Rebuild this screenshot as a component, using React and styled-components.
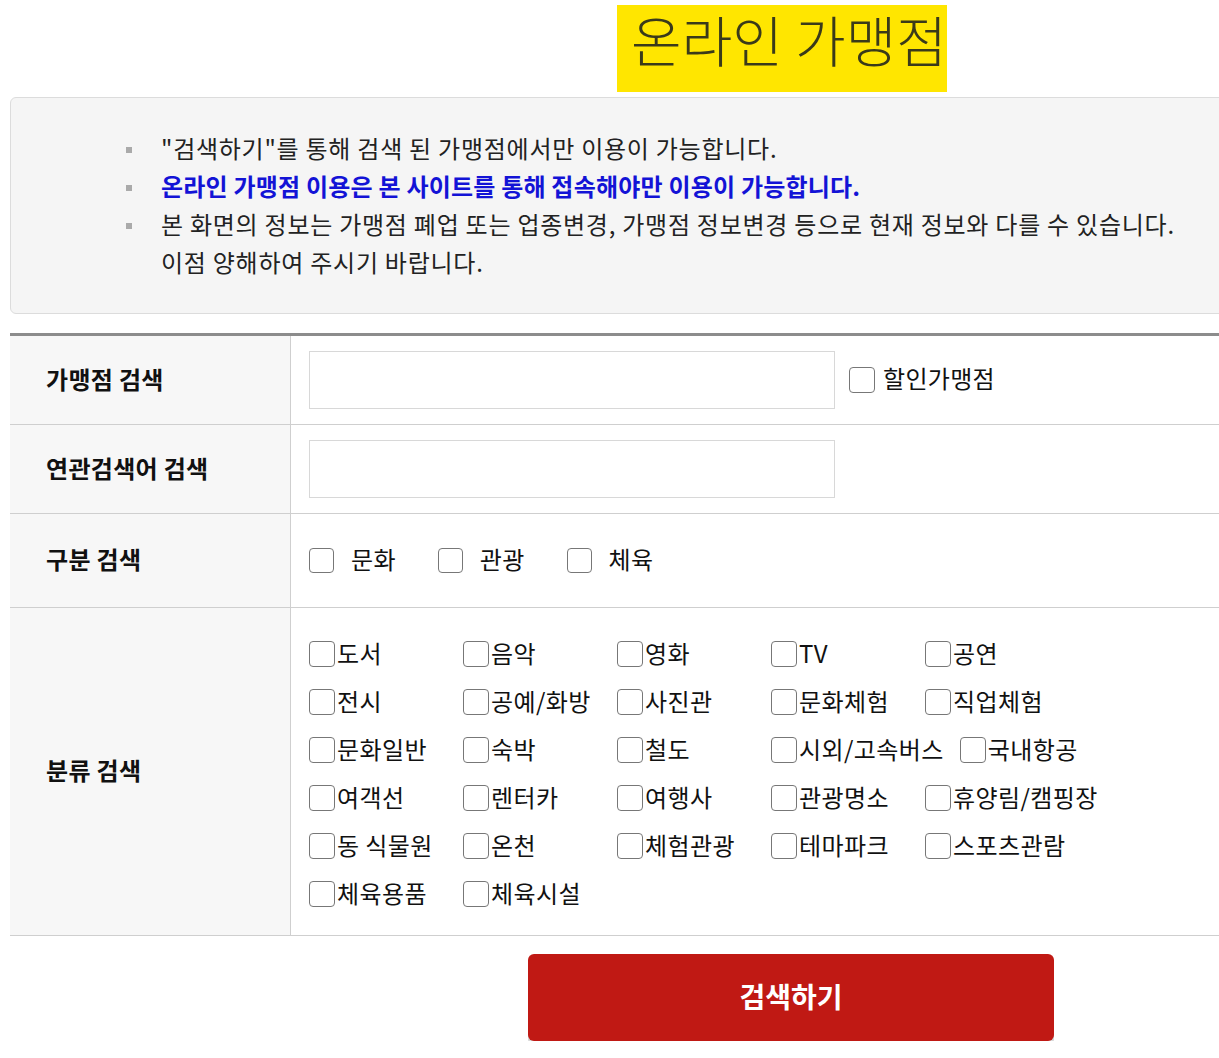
import React from 'react';
import styled, { createGlobalStyle } from 'styled-components';

const GlobalStyle = createGlobalStyle`
  html, body {
    margin: 0;
    padding: 0;
    overflow: hidden;
    background: #fff;
  }
  body {
    font-family: "Noto Sans CJK KR", "Noto Sans", sans-serif;
    color: #222;
  }
`;

const Page = styled.div`
  width: 1562px;
  margin-left: 10px;
`;

const TitleBar = styled.div`
  height: 97px;
  display: flex;
  justify-content: center;
  align-items: flex-start;
`;

const Title = styled.h1`
  margin: 5px 18px 0 0;
  padding: 0 0 0 14px;
  height: 87px;
  line-height: 66px;
  background: #ffe600;
  font-size: 55px;
  font-weight: 300;
  color: #3a3a1a;
`;

const Notice = styled.ul`
  box-sizing: border-box;
  margin: 0;
  height: 217px;
  padding: 31px 0 0 150px;
  list-style: none;
  background: #f5f5f5;
  border: 1px solid #dcdcdc;
  border-radius: 6px;
`;

const NoticeItem = styled.li`
  position: relative;
  font-size: 24px;
  line-height: 38px;
  color: ${({ $strong }) => ($strong ? '#1313d6' : '#222')};
  font-weight: ${({ $strong }) => ($strong ? 700 : 400)};
  letter-spacing: ${({ $strong }) => ($strong ? 0.2 : 0.75)}px;

  &::before {
    content: '';
    position: absolute;
    left: -35px;
    top: 18px;
    width: 6px;
    height: 6px;
    background: #aaa;
  }
`;

const Table = styled.div`
  margin-top: 19px;
  border-top: 3px solid #8c8c8c;
`;

const Row = styled.div`
  display: grid;
  grid-template-columns: 281px 1fr;
  border-bottom: 1px solid #cfcfcf;
  min-height: ${({ $h }) => $h}px;
`;

const Label = styled.div`
  display: flex;
  align-items: center;
  padding: 0 0 4px 36px;
  background: #f7f7f7;
  border-right: 1px solid #cfcfcf;
  font-size: 24px;
  font-weight: 700;
  color: #111;
  letter-spacing: 0.3px;
`;

const Cell = styled.div`
  display: flex;
  flex-direction: ${({ $column }) => ($column ? 'column' : 'row')};
  align-items: ${({ $column }) => ($column ? 'flex-start' : 'center')};
  padding: ${({ $pad }) => $pad || '0 18px'};
`;

const TextInput = styled.input`
  box-sizing: border-box;
  width: 526px;
  height: 58px;
  border: 1px solid #d8d8d8;
  background: #fff;
  outline: none;
`;

const Check = styled.input.attrs({ type: 'checkbox' })`
  appearance: none;
  box-sizing: border-box;
  margin: 0 ${({ $gap }) => $gap ?? 2}px 0 0;
  width: ${({ $size }) => $size || 26}px;
  height: ${({ $size }) => $size || 26}px;
  border: 1px solid #777;
  border-radius: 4px;
  background: #fff;
  flex-shrink: 0;
`;

const CheckLabel = styled.label`
  display: inline-flex;
  align-items: center;
  font-size: 24px;
  line-height: 30px;
  color: #111;
  letter-spacing: 0.3px;
  margin-left: ${({ $ml }) => $ml || 0}px;
  margin-right: ${({ $mr }) => $mr || 0}px;

  span {
    margin-top: -4px;
  }
`;

const CategoryRow = styled.div`
  display: flex;
  height: 48px;
`;

const CategoryItem = styled.label`
  box-sizing: border-box;
  display: inline-flex;
  align-items: center;
  min-width: 154px;
  padding-right: 16px;
  font-size: 24px;
  color: #111;
  letter-spacing: 0.4px;
  white-space: nowrap;

  span {
    margin-top: -4px;
  }
`;

const ButtonBar = styled.div`
  display: flex;
  justify-content: center;
  padding-top: 18px;
`;

const SearchButton = styled.button`
  width: 526px;
  height: 87px;
  padding-bottom: 4px;
  border: none;
  border-radius: 6px;
  background: #c01914;
  box-shadow: 0 4px 0 #d8d8d8;
  color: #fff;
  font-family: inherit;
  font-size: 28px;
  font-weight: 700;
`;

const categories = [
  ['도서', '음악', '영화', 'TV', '공연'],
  ['전시', '공예/화방', '사진관', '문화체험', '직업체험'],
  ['문화일반', '숙박', '철도', '시외/고속버스', '국내항공'],
  ['여객선', '렌터카', '여행사', '관광명소', '휴양림/캠핑장'],
  ['동 식물원', '온천', '체험관광', '테마파크', '스포츠관람'],
  ['체육용품', '체육시설'],
];

export default function App() {
  return (
    <Page>
      <GlobalStyle />
      <TitleBar>
        <Title>온라인 가맹점</Title>
      </TitleBar>

      <Notice>
        <NoticeItem>"검색하기"를 통해 검색 된 가맹점에서만 이용이 가능합니다.</NoticeItem>
        <NoticeItem $strong>온라인 가맹점 이용은 본 사이트를 통해 접속해야만 이용이 가능합니다.</NoticeItem>
        <NoticeItem>
          본 화면의 정보는 가맹점 폐업 또는 업종변경, 가맹점 정보변경 등으로 현재 정보와 다를 수 있습니다.
          <br />
          이점 양해하여 주시기 바랍니다.
        </NoticeItem>
      </Notice>

      <Table>
        <Row $h={88}>
          <Label>가맹점 검색</Label>
          <Cell>
            <TextInput />
            <CheckLabel $ml={14}>
              <Check $gap={8} />
              <span>할인가맹점</span>
            </CheckLabel>
          </Cell>
        </Row>
        <Row $h={88}>
          <Label>연관검색어 검색</Label>
          <Cell>
            <TextInput />
          </Cell>
        </Row>
        <Row $h={93}>
          <Label>구분 검색</Label>
          <Cell>
            {['문화', '관광', '체육'].map((t) => (
              <CheckLabel key={t} $mr={42}>
                <Check $size={25} $gap={17} />
                <span>{t}</span>
              </CheckLabel>
            ))}
          </Cell>
        </Row>
        <Row $h={327}>
          <Label>분류 검색</Label>
          <Cell $column $pad="22px 18px 17px">
            {categories.map((row, i) => (
              <CategoryRow key={i}>
                {row.map((t) => (
                  <CategoryItem key={t}>
                    <Check />
                    <span>{t}</span>
                  </CategoryItem>
                ))}
              </CategoryRow>
            ))}
          </Cell>
        </Row>
      </Table>

      <ButtonBar>
        <SearchButton>검색하기</SearchButton>
      </ButtonBar>
    </Page>
  );
}
